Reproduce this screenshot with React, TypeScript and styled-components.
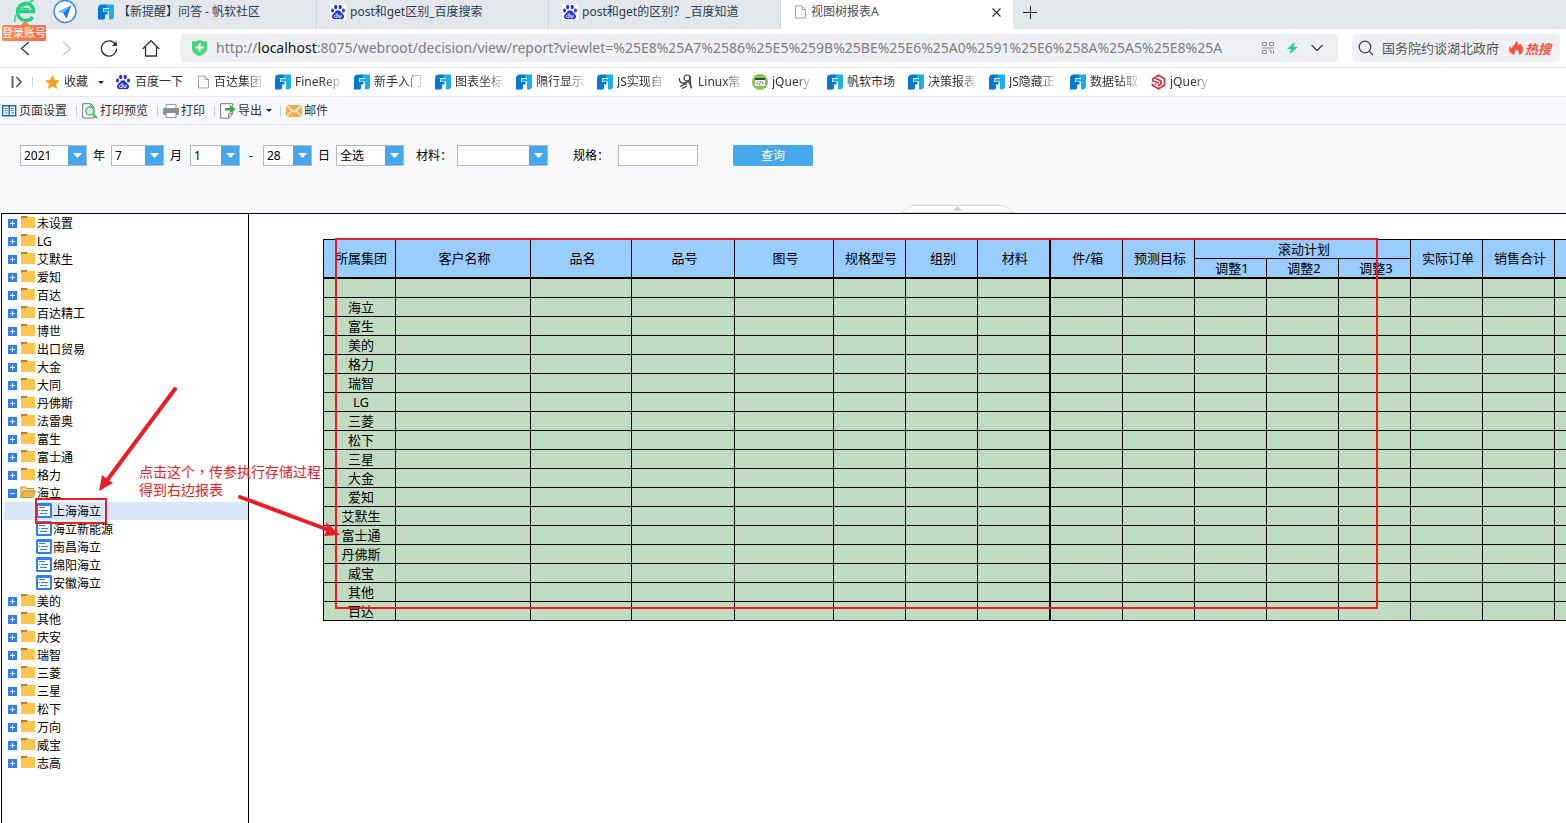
import React from "react";
import styled, { createGlobalStyle } from "styled-components";

const GlobalStyle = createGlobalStyle`
  * { box-sizing: border-box; }
  body {
    margin: 0;
    background: #fff;
    font-family: "Noto Sans", "Noto Sans CJK SC", sans-serif;
    font-size: 12px;
    overflow: hidden;
  }
  button, input, select { font: inherit; color: inherit; margin: 0; }
  button { border: 0; background: none; padding: 0; cursor: pointer; }
  svg { display: block; flex: none; }
`;

const Page = styled.div`
  display: flex;
  flex-direction: column;
  min-height: 100vh;
`;

/* ---------- browser tabs ---------- */

const TabStrip = styled.header`
  display: flex;
  height: 29px;
  background: #e3e6eb;
  color: #2b3d52;
`;

const Brand = styled.div`
  position: relative;
  display: flex;
  gap: 17px;
  width: 85px;
  padding-left: 13px;
`;

const LoginBadge = styled.a`
  position: absolute;
  left: 1px;
  top: 24px;
  z-index: 2;
  width: 46px;
  height: 18px;
  border: 1px solid #fff;
  border-radius: 2px;
  background: linear-gradient(90deg, #fd8a54, #fb6a4e);
  color: #fff;
  font-size: 11px;
  line-height: 16px;
  text-align: center;
  text-decoration: none;
  white-space: nowrap;

  &::before {
    content: "";
    position: absolute;
    left: 19px;
    top: -4px;
    border: 4px solid transparent;
    border-top: 0;
    border-bottom-color: #fb7a50;
  }
`;

const Tab = styled.div<{ $active?: boolean }>`
  display: flex;
  align-items: center;
  gap: 4px;
  width: 232px;
  padding: 0 12px 5px 13px;
  line-height: 18px;
  background: ${(p) => (p.$active ? "#fff" : "transparent")};
  color: ${(p) => (p.$active ? "#4b4f55" : "inherit")};
  box-shadow: ${(p) => (p.$active ? "none" : "inset -1px 0 0 #d3d7dd")};
`;

const TabTitle = styled.span`
  flex: 1;
  white-space: nowrap;
`;

const NewTab = styled.button`
  display: flex;
  align-items: center;
  padding: 0 10px 5px;
`;

/* ---------- navigation ---------- */

const NavBar = styled.nav`
  display: flex;
  align-items: center;
  height: 39px;
  padding: 0 6px 0 4px;
  border-bottom: 1px solid #e6e8ec;
`;

const NavButton = styled.button`
  display: flex;
  align-items: center;
  justify-content: center;
  width: 42px;
  height: 28px;
`;

const AddressBox = styled.div`
  display: flex;
  flex: 1;
  align-items: center;
  gap: 13px;
  height: 28px;
  margin: 0 14px 0 8px;
  padding: 0 15px 0 12px;
  border-radius: 4px;
  background: #eef0f3;
  min-width: 0;
`;

const Url = styled.span`
  flex: 1;
  margin-left: -4px;
  overflow: hidden;
  white-space: nowrap;
  color: #7d7d7d;
  font-size: 14px;
  line-height: 20px;

  b { font-weight: 400; color: #111; }
`;

const SearchBox = styled.label`
  display: flex;
  align-items: center;
  gap: 2px;
  width: 208px;
  height: 28px;
  padding: 0 9px 0 6px;
  border-radius: 4px;
  background: #eef0f3;
  color: #555;
`;

const SearchInput = styled.input`
  flex: 1;
  width: 100px;
  margin-left: 6px;
  padding: 0;
  border: 0;
  outline: 0;
  background: transparent;
  font-size: 13px;

  &::placeholder { color: #555; opacity: 1; }
`;

const HotWord = styled.em`
  color: #f9503f;
  font-size: 13px;
  font-weight: 700;
`;

/* ---------- bookmarks ---------- */

const BookmarkBar = styled.nav`
  display: flex;
  align-items: center;
  height: 29px;
  padding-left: 11px;
  border-bottom: 1px solid #e6e8ec;
  color: #333;
`;

const Bookmark = styled.a<{ $width: number }>`
  display: flex;
  align-items: center;
  gap: 4px;
  width: ${(p) => p.$width}px;
  color: inherit;
  line-height: 18px;
  text-decoration: none;
`;

const BookmarkText = styled.span<{ $fade?: boolean }>`
  white-space: nowrap;
  mask-image: ${(p) => (p.$fade ? "linear-gradient(90deg, #000 65%, #0003)" : "none")};
`;

const Divider = styled.i<{ $before: number; $after: number }>`
  width: 1px;
  height: 10px;
  margin: 0 ${(p) => p.$after}px 0 ${(p) => p.$before}px;
  background: #c9ccd1;
`;

const Caret = styled.i<{ $gap: number }>`
  border: 3px solid transparent;
  border-top-color: #222;
  border-bottom: 0;
  margin-left: ${(p) => p.$gap}px;
`;

/* ---------- report toolbar ---------- */

const ReportBar = styled.div`
  display: flex;
  align-items: center;
  height: 28px;
  padding-left: 2px;
  border-bottom: 1px solid #e3e6ea;
  background: #f6f8fb;
  color: #333;
`;

const ReportAction = styled.button`
  display: flex;
  align-items: center;
  gap: 2px;
  line-height: 18px;
`;

/* ---------- query form ---------- */

const QueryPanel = styled.form`
  display: flex;
  flex-direction: column;
  justify-content: space-between;
  height: 88px;
  padding-top: 20px;
  background: #f6f8fa;
  color: #000;
`;

const Fields = styled.div`
  display: flex;
  align-items: center;
  padding-left: 20px;
  line-height: 21px;
`;

const Caption = styled.label<{ $width: number; $indent?: number }>`
  width: ${(p) => p.$width}px;
  padding-left: ${(p) => p.$indent ?? 6}px;
  white-space: nowrap;
`;

const Combo = styled.span<{ $width: number }>`
  display: grid;
  grid-template-columns: 1fr 18px;
  width: ${(p) => p.$width}px;
  height: 21px;
  border: 1px solid #b2b8ca;
  background: #fff;
`;

const ComboSelect = styled.select`
  grid-area: 1 / 1 / 2 / 3;
  appearance: none;
  width: 100%;
  padding: 0 18px 0 3px;
  border: 0;
  outline: 0;
  background: transparent;
  line-height: 19px;
`;

const ComboArrow = styled.span`
  grid-area: 1 / 2 / 2 / 3;
  display: flex;
  align-items: center;
  justify-content: center;
  background: #47a7eb;
  pointer-events: none;
`;

const TextField = styled.input`
  width: 80px;
  height: 21px;
  padding: 0 3px;
  border: 1px solid #b2b8ca;
  background: #fff;
`;

const QueryButton = styled.button`
  width: 80px;
  height: 21px;
  margin-left: 35px;
  border-radius: 2px;
  background: #47a7eb;
  color: #fff;
  line-height: 21px;
`;

const CollapseHandle = styled.button`
  width: 113px;
  height: 8px;
  margin-left: 901px;
`;

/* ---------- content ---------- */

const Content = styled.main`
  position: relative;
  display: flex;
  flex: 1;
  margin-left: 1px;
  border-top: 1px solid #000;
  border-left: 1px solid #000;
  overflow: hidden;
  color: #000;
`;

const Tree = styled.ul`
  flex: none;
  width: 247px;
  margin: 0;
  padding: 0 0 0 2px;
  border-right: 1px solid #000;
  list-style: none;
`;

const TreeRow = styled.li<{ $leaf?: boolean; $selected?: boolean }>`
  display: flex;
  align-items: center;
  height: 18px;
  padding-left: ${(p) => (p.$leaf ? 32 : 4)}px;
  background: ${(p) => (p.$selected ? "#d9e7fb" : "transparent")};
  line-height: 18px;
  white-space: nowrap;
`;

const Toggle = styled.button`
  width: 9px;
  height: 9px;
  margin-right: 3px;
`;

const TreeLabel = styled.span`
  padding: 2px 0 0 1px;
`;

const ReportArea = styled.section`
  flex: 1;
  min-width: 0;
  padding: 25px 0 0 74px;
  overflow: hidden;
`;

const Report = styled.table`
  table-layout: fixed;
  width: 1304px;
  border-collapse: collapse;
  font-size: 13px;
  line-height: 16px;

  thead { border-bottom: 2px solid #000; }
  tbody tr:first-child td { height: 20px; }
`;

const Head = styled.th`
  height: 19px;
  padding: 0 0 0 3px;
  border: 1px solid #000;
  background: #99ccff;
  font-weight: 400;
  white-space: nowrap;
`;

const Cell = styled.td`
  height: 19px;
  padding: 0 0 0 3px;
  border: 1px solid #000;
  background: #c0dcc0;
  text-align: center;
`;

const Column = styled.col<{ $width: number; $strong?: boolean }>`
  width: ${(p) => p.$width}px;
  border-right: ${(p) => (p.$strong ? "2px solid #000" : "0")};
`;

/* ---------- annotations ---------- */

const Marks = styled.svg`
  position: absolute;
  left: -2px;
  top: -1px;
  pointer-events: none;
`;

const Note = styled.p`
  position: absolute;
  left: 137px;
  top: 248px;
  margin: 0;
  color: #ed1c24;
  font-family: "Noto Sans CJK TC", sans-serif;
  font-size: 14px;
  line-height: 18px;
  white-space: nowrap;
  pointer-events: none;
`;

/* ---------- icons ---------- */

const FineIcon = () => (
  <svg width="16" height="16" viewBox="0 0 16 16">
    <path d="M0 4.500Q0 .500 4 .500h5.500V5H6Q5 5 5 6v8q0 1.500-1.500 1.500H0z" fill="#0079d6" />
    <path d="M8.500.500H16V12q0 3.500-3.500 3.500H11V5H8.500z" fill="#1fade6" />
    <path d="M5 8h4.500v2.500H7V14q0 1.500-2 1.500H3.500V8z" fill="#0079d6" />
    <path d="M5 4.500h6M5 7.500h5.500" stroke="#e8f6fd" />
    <path d="M6 5h5v2.500H6z" fill="#1fade6" />
  </svg>
);

const PawIcon = () => (
  <svg width="16" height="16" viewBox="0 0 16 16">
    <rect width="16" height="16" rx="1" fill="#fff" />
    <g fill="#2431dc">
      <ellipse cx="5.700" cy="3" rx="1.600" ry="2.200" />
      <ellipse cx="10.200" cy="3" rx="1.600" ry="2.200" />
      <ellipse cx="2.500" cy="6.500" rx="1.500" ry="2" />
      <ellipse cx="13.500" cy="6.500" rx="1.500" ry="2" />
      <path d="M8 6.200c2 0 2.500 1.600 3.800 2.800 1.400 1.200 2.200 2 2.200 3.600 0 2.200-1.600 2.800-3.200 2.600-1.600-.2-4-.2-5.600 0S2 14.800 2 12.600C2 11 2.800 10.200 4.200 9 5.500 7.800 6 6.200 8 6.200z" />
    </g>
    <path d="M7.200 9v4.500H5.600a1.200 1.200 0 0 1 0-2.600H7M8.900 10.600v2.800H11v-2.800" fill="none" stroke="#fff" strokeWidth=".9" />
  </svg>
);

const FileIcon = () => (
  <svg width="13" height="14" viewBox="0 0 13 14">
    <path d="M1.500 1h6.500l3.500 3.500V13h-10zM8 1v3.500h3.500" fill="#fbfbfb" stroke="#a3a3a3" />
  </svg>
);

const BrowserLogo = () => (
  <svg width="23" height="23" viewBox="0 0 23 23" fill="none">
    <path d="M5 11.500h15.500C20.500 6 17 3.500 13 3.500 8 3.500 4.500 7 4.500 12s3.500 8.500 8.500 8.500c3 0 5.500-1.500 6.800-3.500" stroke="#1fd07c" strokeWidth="3.400" />
    <path d="M2 22C0 17 8 5 21 0" stroke="#35d98b" strokeWidth="1.600" />
    <path d="M9.500 8.700h7" stroke="#1fd07c" strokeWidth="1.400" />
  </svg>
);

const PlaneIcon = () => (
  <svg width="24" height="24" viewBox="0 0 24 24">
    <circle cx="12" cy="11.500" r="11" fill="#fff" stroke="#3585f5" strokeWidth="1.400" />
    <path d="M18.500 4.800 4.500 12l5.600 1z" fill="#5cb3fb" />
    <path d="M18.500 4.800 10.100 13l3.400 5.800z" fill="#2a79ee" />
  </svg>
);

const PlusBox = ({ open }: { open?: boolean }) => (
  <svg width="9" height="9" viewBox="0 0 9 9">
    <rect width="9" height="9" fill="#2f7ff0" />
    <path d={open ? "M2 4.500h5" : "M2 4.500h5M4.500 2v5"} stroke="#fff" />
  </svg>
);

const FolderIcon = () => (
  <svg width="16" height="14" viewBox="0 0 16 14">
    <path d="M1 1h14v11H1z" fill="#fbc550" />
    <path d="M1 0h7L6.500 2h-4L1 3z" fill="#bd7f28" />
  </svg>
);

const OpenFolderIcon = () => (
  <svg width="16" height="14" viewBox="0 0 16 14">
    <path d="M1 11.500V1h4.500l1.200 1.500h6.800V5" fill="#f7d690" stroke="#c58d35" />
    <path d="M.8 11.500 3.500 5h12l-2.700 6.500z" fill="#efb653" stroke="#c58d35" />
  </svg>
);

const LeafIcon = () => (
  <svg width="16" height="16" viewBox="0 0 16 16">
    <rect width="16" height="15" rx="1.500" fill="#2f7ff0" />
    <path d="M2 3h12v10H2z" fill="#fff" />
    <path d="M3 4.500h6M5 7.500h7M3 7.500h1M6 7.500h6M4 10.500h7" stroke="#2f7ff0" />
  </svg>
);

const LinuxIcon = () => (
  <svg width="16" height="16" viewBox="0 0 16 16" fill="none" stroke="#3b3b3b" strokeWidth="1.200">
    <circle cx="9" cy="4" r="3" />
    <path d="M1.500 4c-.5 3 .5 4.500 3 5s4.500-.5 6.500-2.500M2 12.500 6.500 10l2.500.5M4 14.500l5-2.500M12 2l1 12.500M10.500 7l1.500 3.500 2 3" />
  </svg>
);

const CodeIcon = () => (
  <svg width="16" height="16" viewBox="0 0 16 16">
    <circle cx="8" cy="8" r="8" fill="#8cc152" />
    <rect x="3" y="4" width="10" height="8" rx="1" fill="#f4f6f8" />
    <path d="M3 4h10v2H3z" fill="#374554" />
    <path d="m6.200 7.500-1.500 1.500 1.500 1.500M9.800 7.500l1.500 1.500-1.500 1.500M8.500 7.200l-1 3.500" fill="none" stroke="#374554" strokeWidth=".8" />
  </svg>
);

const RedHexIcon = () => (
  <svg width="15" height="16" viewBox="0 0 15 16" fill="none" stroke="#c8323a" strokeWidth="1.700">
    <path d="M1 5.500 7.500 1.200 13.500 4.800v6.400l-6 3.600-6-3.600V9.500" />
    <path d="M1 6.500 8 9M5 4.500l5 2.500v3l-3 2M4.500 9.500v1.500" />
  </svg>
);

const StarIcon = () => (
  <svg width="15" height="14" viewBox="0 0 15 14">
    <path d="m7.500 0 2.200 4.800 5.300.6-4 3.500 1.200 5.100-4.700-2.700L2.800 14 4 8.900 0 5.400l5.300-.6z" fill="#f9a11b" />
  </svg>
);

const iconFor: Record<string, () => React.JSX.Element> = {
  fine: FineIcon,
  paw: PawIcon,
  file: FileIcon,
  linux: LinuxIcon,
  code: CodeIcon,
  hex: RedHexIcon,
};

/* ---------- data ---------- */

const bookmarks: { icon: string; text: string; width: number; fade?: boolean }[] = [
  { icon: "paw", text: "百度一下", width: 82 },
  { icon: "file", text: "百达集团", width: 78, fade: true },
  { icon: "fine", text: "FineRep", width: 79, fade: true },
  { icon: "fine", text: "新手入门", width: 81, fade: true },
  { icon: "fine", text: "图表坐标", width: 81, fade: true },
  { icon: "fine", text: "隔行显示", width: 81, fade: true },
  { icon: "fine", text: "JS实现自", width: 81, fade: true },
  { icon: "linux", text: "Linux常", width: 74, fade: true },
  { icon: "code", text: "jQuery", width: 75, fade: true },
  { icon: "fine", text: "帆软市场", width: 81 },
  { icon: "fine", text: "决策报表", width: 81, fade: true },
  { icon: "fine", text: "JS隐藏正", width: 81, fade: true },
  { icon: "fine", text: "数据钻取", width: 81, fade: true },
  { icon: "hex", text: "jQuery", width: 81, fade: true },
];

const before = ["未设置", "LG", "艾默生", "爱知", "百达", "百达精工", "博世", "出口贸易", "大金", "大同", "丹佛斯", "法雷奥", "富生", "富士通", "格力"];
const children = ["上海海立", "海立新能源", "南昌海立", "绵阳海立", "安徽海立"];
const after = ["美的", "其他", "庆安", "瑞智", "三菱", "三星", "松下", "万向", "威宝", "志高"];

const columnWidths = [72, 135, 101, 103, 99, 72, 72, 72, 73, 72, 72, 72, 72, 72, 72, 72];
const leading = ["所属集团", "客户名称", "品名", "品号", "图号", "规格型号", "组别", "材料", "件/箱", "预测目标"];
const groups = ["", "海立", "富生", "美的", "格力", "瑞智", "LG", "三菱", "松下", "三星", "大金", "爱知", "艾默生", "富士通", "丹佛斯", "威宝", "其他", "百达"];

const Select = ({ id, value, width }: { id: string; value: string; width: number }) => (
  <Combo $width={width}>
    <ComboSelect id={id} aria-label={id} defaultValue={value}>
      <option>{value}</option>
    </ComboSelect>
    <ComboArrow>
      <svg width="9" height="5" viewBox="0 0 9 5"><path d="M0 0h9L4.500 5z" fill="#fff" /></svg>
    </ComboArrow>
  </Combo>
);

const Folder = ({ name }: { name: string }) => (
  <TreeRow>
    <Toggle aria-label="展开"><PlusBox /></Toggle>
    <FolderIcon />
    <TreeLabel>{name}</TreeLabel>
  </TreeRow>
);

export default function App() {
  return (
    <Page>
      <GlobalStyle />
      <TabStrip>
        <Brand>
          <BrowserLogo />
          <PlaneIcon />
          <LoginBadge href="#login">登录账号</LoginBadge>
        </Brand>
        <Tab><FineIcon /><TabTitle>【新提醒】问答 - 帆软社区</TabTitle></Tab>
        <Tab><PawIcon /><TabTitle>post和get区别_百度搜索</TabTitle></Tab>
        <Tab><PawIcon /><TabTitle>post和get的区别？_百度知道</TabTitle></Tab>
        <Tab $active>
          <FileIcon />
          <TabTitle>视图树报表A</TabTitle>
          <button aria-label="关闭">
            <svg width="9" height="9" viewBox="0 0 9 9"><path d="m.5.5 8 8m0-8-8 8" stroke="#333" strokeWidth="1.200" /></svg>
          </button>
        </Tab>
        <NewTab aria-label="新标签页">
          <svg width="14" height="14" viewBox="0 0 14 14"><path d="M0 7.500h14M7.500 1v13" stroke="#222" /></svg>
        </NewTab>
      </TabStrip>

      <NavBar>
        <NavButton aria-label="后退">
          <svg width="10" height="16" viewBox="0 0 10 16"><path d="M9 2 1.500 8.500 9 15" fill="none" stroke="#333" strokeWidth="1.300" /></svg>
        </NavButton>
        <NavButton aria-label="前进">
          <svg width="10" height="16" viewBox="0 0 10 16"><path d="m1 2 7.500 6.500L1 15" fill="none" stroke="#c4c6ca" strokeWidth="1.300" /></svg>
        </NavButton>
        <NavButton aria-label="刷新">
          <svg width="18" height="18" viewBox="0 0 18 18"><path d="M15.500 5.500A7.600 7.600 0 1 0 16.600 9.500" fill="none" stroke="#333" strokeWidth="1.300" /><path d="M16.800 2V7h-5z" fill="#333" /></svg>
        </NavButton>
        <NavButton aria-label="主页">
          <svg width="18" height="18" viewBox="0 0 18 18"><path d="M.7 10 9 1.700l8.300 8.300M3.500 8v9h11V8" fill="none" stroke="#333" strokeWidth="1.300" /></svg>
        </NavButton>
        <AddressBox>
          <svg width="15" height="16" viewBox="0 0 15 16"><path d="M0 1.500Q4 1.500 7.500 0 11 1.500 15 1.500V8c0 4-3 6.500-7.500 8C3 14.500 0 12 0 8z" fill="#45d67f" /><path d="M3.500 7.500h8m-4-4v8" stroke="#fff" strokeWidth="2" /></svg>
          <Url>http://<b>localhost</b>:8075/webroot/decision/view/report?viewlet=%25E8%25A7%2586%25E5%259B%25BE%25E6%25A0%2591%25E6%258A%25A5%25E8%25A</Url>
          <svg width="12" height="12" viewBox="0 0 12 12" fill="none" stroke="#8b8e92"><path d="M.5.500h4v3h-4zM7.500.500h4v3h-4zM0 6h12M.5 8.500h4v3h-4zM7 8.500h2v3M11.500 8v4" /></svg>
          <svg width="11" height="12" viewBox="0 0 11 12"><path d="M7.500 0 0 7h4l-1.500 5L11 5H6.500z" fill="#20d381" /></svg>
          <svg width="12" height="8" viewBox="0 0 12 8"><path d="m.5 1 5.500 5.500L11.500 1" fill="none" stroke="#444" strokeWidth="1.300" /></svg>
        </AddressBox>
        <SearchBox>
          <svg width="16" height="16" viewBox="0 0 16 16"><circle cx="7" cy="7" r="5.800" fill="none" stroke="#444" strokeWidth="1.300" /><path d="m11.500 11.500 3.500 3.500" stroke="#444" strokeWidth="1.300" /></svg>
          <SearchInput aria-label="搜索" placeholder="国务院约谈湖北政府" />
          <svg width="14" height="14" viewBox="0 0 14 14"><path d="M7 0c2 1.500 2.500 3 2.300 4.500C10.500 4 11 3 11 2.500c2 2 3 4 3 6.500 0 2.500-1.500 4-4 5 .5-2.500-.5-4-2.500-5.500C6 10.500 5 11.500 5.500 14 2 13 0 11 0 8.500 0 7 .5 6 1.500 5c0 1.500.5 2 1.500 2.500C3 4.500 6.500 4 7 0z" fill="#f9503f" /></svg>
          <HotWord>热搜</HotWord>
        </SearchBox>
      </NavBar>

      <BookmarkBar>
        <button aria-label="展开侧栏">
          <svg width="12" height="12" viewBox="0 0 12 12"><path d="M1.500 0v12" stroke="#666" strokeWidth="2" /><path d="m5.500 1 4.500 5-4.500 5" fill="none" stroke="#555" strokeWidth="1.600" /></svg>
        </button>
        <Divider $before={9} $after={12} />
        <Bookmark as="button" $width={70}>
          <StarIcon />
          <BookmarkText>收藏</BookmarkText>
          <Caret $gap={6} />
        </Bookmark>
        {bookmarks.map((b, i) => {
          const Icon = iconFor[b.icon];
          return (
            <Bookmark key={i} href="#bookmark" $width={b.width}>
              <Icon />
              <BookmarkText $fade={b.fade}>{b.text}</BookmarkText>
            </Bookmark>
          );
        })}
      </BookmarkBar>

      <ReportBar>
        <ReportAction>
          <svg width="15" height="12" viewBox="0 0 15 12"><path d="M.7.700h13v10H.7zM7.200.700v10" fill="#fff" stroke="#1d64a8" strokeWidth="1.400" /><path d="M2.500 3.500h3M2.500 5.700h3M2.500 8h3M9 3.500h3M9 5.700h3M9 8h3" stroke="#1b86d0" /></svg>
          页面设置
        </ReportAction>
        <Divider $before={9} $after={5} />
        <ReportAction>
          <svg width="16" height="16" viewBox="0 0 16 16"><path d="M.7.700h8l3.300 3.300v11H.7zM8.700.700V4H12" fill="#fff" stroke="#777" /><circle cx="7.800" cy="8" r="4" fill="#d8f3ff" stroke="#3fd04a" strokeWidth="1.500" /><path d="m10.800 11 4.200 4.200" stroke="#3fd04a" strokeWidth="2" /></svg>
          打印预览
        </ReportAction>
        <Divider $before={9} $after={5} />
        <ReportAction>
          <svg width="16" height="14" viewBox="0 0 16 14"><path d="M3 .500h10v4H3z" fill="#fff" stroke="#999" /><rect y="4" width="16" height="7" rx="1" fill="#8a8f94" /><path d="M3 8.500h10v5H3z" fill="#fff" stroke="#8a8f94" /></svg>
          打印
        </ReportAction>
        <Divider $before={9} $after={5} />
        <ReportAction>
          <svg width="16" height="16" viewBox="0 0 16 16"><path d="M.7.700h12v10l-4 4.500h-8zM12.700 10.700h-4v4.500" fill="#fff" stroke="#777" /><path d="M5 5h5V2l5.500 4.200L10 10.300V7.500H5z" fill="#36a852" /></svg>
          导出
          <Caret $gap={2} />
        </ReportAction>
        <Divider $before={8} $after={5} />
        <ReportAction>
          <svg width="16" height="12" viewBox="0 0 16 12"><path d="M0 0h16v12H0z" fill="#eeb04e" /><path d="m0 0 8 7 8-7M0 12l6-6.500M16 12l-6-6.500" fill="none" stroke="#fff" strokeWidth="1.100" /></svg>
          邮件
        </ReportAction>
      </ReportBar>

      <QueryPanel onSubmit={(e) => e.preventDefault()}>
        <Fields>
          <Select id="year" value="2021" width={67} />
          <Caption htmlFor="year" $width={24}>年</Caption>
          <Select id="month" value="7" width={53} />
          <Caption htmlFor="month" $width={26}>月</Caption>
          <Select id="from" value="1" width={50} />
          <Caption htmlFor="to" $width={23} $indent={9}>-</Caption>
          <Select id="to" value="28" width={49} />
          <Caption htmlFor="to" $width={24}>日</Caption>
          <Select id="scope" value="全选" width={68} />
          <Caption htmlFor="material" $width={53} $indent={12}>材料：</Caption>
          <Select id="material" value="" width={91} />
          <Caption htmlFor="spec" $width={70} $indent={25}>规格：</Caption>
          <TextField id="spec" />
          <QueryButton type="submit">查询</QueryButton>
        </Fields>
        <CollapseHandle type="button" aria-label="收起">
          <svg width="113" height="8" viewBox="0 0 113 8"><path d="M0 7.500 10.500.500h92L113 7.500z" fill="#fff" stroke="#dcdcdc" /><path d="m52 6 4.500-5L61 6z" fill="#cfcfcf" /></svg>
        </CollapseHandle>
      </QueryPanel>

      <Content>
        <Tree>
          {before.map((n) => <Folder key={n} name={n} />)}
          <TreeRow>
            <Toggle aria-label="收起"><PlusBox open /></Toggle>
            <OpenFolderIcon />
            <TreeLabel>海立</TreeLabel>
          </TreeRow>
          {children.map((n, i) => (
            <TreeRow key={n} $leaf $selected={i === 0}>
              <LeafIcon />
              <TreeLabel>{n}</TreeLabel>
            </TreeRow>
          ))}
          {after.map((n) => <Folder key={n} name={n} />)}
        </Tree>

        <ReportArea>
          <Report>
            <colgroup>
              {columnWidths.map((w, i) => <Column key={i} $width={w} $strong={i === 7} />)}
            </colgroup>
            <thead>
              <tr>
                {leading.map((h) => <Head key={h} rowSpan={2}>{h}</Head>)}
                <Head colSpan={3}>滚动计划</Head>
                <Head rowSpan={2}>实际订单</Head>
                <Head rowSpan={2}>销售合计</Head>
                <Head rowSpan={2} />
              </tr>
              <tr>
                <Head>调整1</Head>
                <Head>调整2</Head>
                <Head>调整3</Head>
              </tr>
            </thead>
            <tbody>
              {groups.map((g, r) => (
                <tr key={r}>
                  {columnWidths.map((_, c) => <Cell key={c}>{c === 0 ? g : null}</Cell>)}
                </tr>
              ))}
            </tbody>
          </Report>
        </ReportArea>

        <Marks width="1400" height="420" viewBox="0 213 1400 420" fill="none" stroke="#ed1c24" strokeWidth="2">
          <path d="M336 239h1041v369H336zM36 499h70v24H36z" />
          <path d="M175 389 108 479M240 497l86 32" strokeWidth="4" strokeLinecap="round" />
          <path d="m99 491 3-16 5 4 6 4zM340 535l-16 1 3-6-1-8z" fill="#ed1c24" stroke="none" />
        </Marks>
        <Note>点击这个，传参执行存储过程<br />得到右边报表</Note>
      </Content>
    </Page>
  );
}
